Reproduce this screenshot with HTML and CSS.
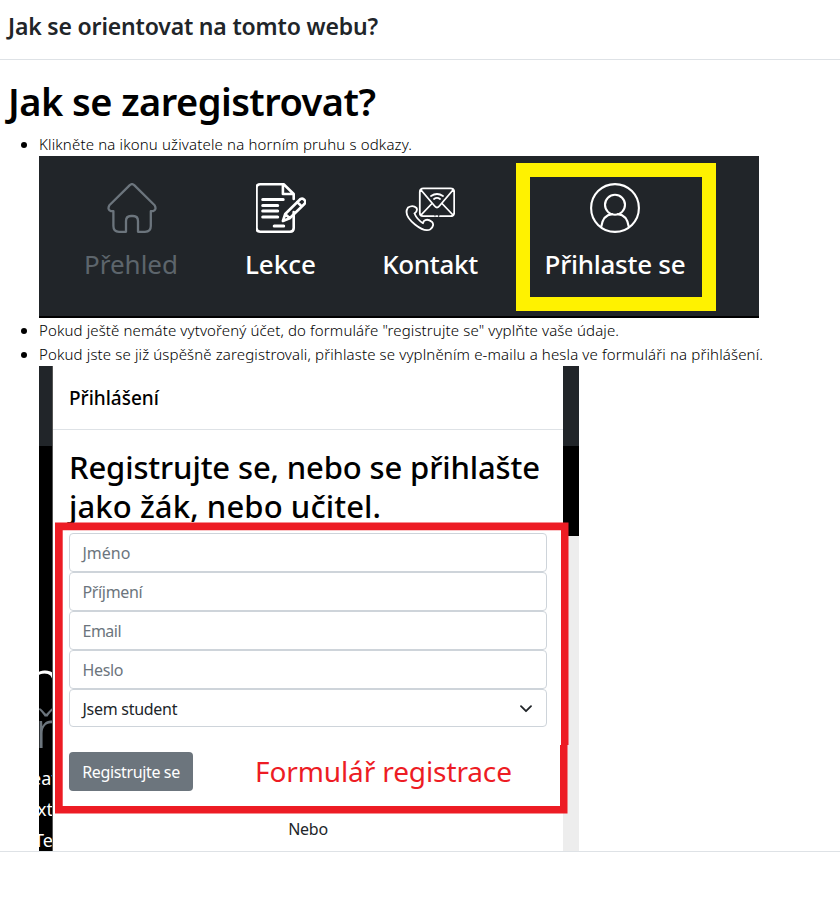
FILE: index.html
```html
<!DOCTYPE html>
<html lang="cs">
<head>
<meta charset="utf-8">
<title>Jak se orientovat na tomto webu?</title>
<link rel="stylesheet" href="styles.css">
</head>
<body>
<header class="modal-header"><h5 class="modal-title">Jak se orientovat na tomto webu?</h5></header>
<main class="modal-body">
  <h1 class="heading">Jak se zaregistrovat?</h1>
  <ul class="steps">
    <li><span class="step s1">Klikněte na ikonu uživatele na horním pruhu s odkazy.</span>
      <div class="nav-shot">
        <div class="nav-item muted">
          <svg viewBox="0 0 50 50"><path d="M22.8 2.1Q25 .2 27.2 2.1L47.6 22.3Q50 26.8 46 28.2H43.8V43Q43.8 48.8 38 48.8H31V38Q31 33 26 33H24Q19 33 19 38V48.8H12Q6.4 48.8 6.4 43V28.2H4Q0 26.8 2.4 22.3Z" stroke-width="2.3"/></svg>
          <span>Přehled</span>
        </div>
        <div class="nav-item lekce">
          <svg viewBox="0 0 50 50"><g stroke-width="2.6" transform="translate(-.8 0)"><path d="M38.5 16V11L28.5 1.3H5Q1.3 1.3 1.3 5V45Q1.3 48.7 5 48.7H34.8Q38.5 48.7 38.5 45V29M27.7 2V11H38"/><path d="M7.5 16.5H28M7.5 22.5H22.5M7.5 28H22.5M7.5 34H22.5M19 43H28.5" stroke-width="3"/><path d="M27.7 38L30 31 45 16.2Q47.5 14.8 49.2 16.8 51 18.8 49.2 21L34.5 35.2ZM30.2 31.2L34.3 35M42 19L46.5 23.4"/></g></svg>
          <span>Lekce</span>
        </div>
        <div class="nav-item kontakt">
          <svg viewBox="0 0 50 50"><g stroke-width="1.8"><path d="M29 33.2H18Q14.8 33.2 14.8 30V9Q14.8 5.3 18.5 5.3H45.5Q49.2 5.3 49.2 9V29.5Q49.2 33.2 45.5 33.2H35M31 33.2H32.5M16 7L29.2 22.5Q32 26.5 34.8 22.5L48 7M16 32L26.5 21M48 32L37.5 21"/><path d="M26 13Q32 9 38 13M29 16Q32 13.8 35 16"/><path d="M9.5 30.5Q13 28 11.5 25 8 21.5 3 24.5-2 32 10 41.5 20 49.5 25.5 46.2 30 42 26.8 38.7 22 35 18.8 38.2L18 40.2Q12 36.5 9.5 30.5"/></g></svg>
          <span>Kontakt</span>
        </div>
        <div class="nav-item login">
          <svg viewBox="0 0 50 50"><g stroke-width="2.1"><circle cx="25" cy="25" r="23.9"/><circle cx="25" cy="21.8" r="10"/><path d="M11.3 43.5Q13 32 22 31.1M38.7 43.5Q37 32 28 31.1"/></g></svg>
          <span>Přihlaste se</span>
        </div>
      </div>
    </li>
    <li><span class="step s2">Pokud ještě nemáte vytvořený účet, do formuláře "registrujte se" vyplňte vaše údaje.</span></li>
    <li><span class="step s3">Pokud jste se již úspěšně zaregistrovali, přihlaste se vyplněním e-mailu a hesla ve formuláři na přihlášení.</span>
      <div class="form-shot">
        <div class="strip left">
          <span class="big">n</span><span class="big grey">ř</span>
          <span class="bit b1">eat</span><span class="bit b2">xt</span><span class="bit b3">Te</span>
        </div>
        <div class="panel">
          <div class="panel-head">Přihlášení</div>
          <h2 class="panel-title"><span class="t1">Registrujte se, nebo se přihlašte</span><br><span class="t2">jako žák, nebo učitel.</span></h2>
          <div class="fields">
            <div class="field"><span class="f1">Jméno</span></div>
            <div class="field"><span class="f2">Příjmení</span></div>
            <div class="field"><span class="f3">Email</span></div>
            <div class="field"><span class="f2">Heslo</span></div>
            <div class="field select"><span>Jsem student</span><svg viewBox="0 0 12 8"><path d="M1 1.2L6 6.2L11 1.2" stroke-width="1.8"/></svg></div>
          </div>
          <div class="actions"><div class="button"><span>Registrujte se</span></div><div class="note">Formulář registrace</div></div>
          <div class="or">Nebo</div>
        </div>
        <div class="strip right"></div>
        <svg class="frame" viewBox="0 0 514 293"><path d="M0 .5H513.5V223H512.5V291.5H0ZM7.7 8.2V284H505V223H506V8.2Z"/></svg>
      </div>
    </li>
  </ul>
</main>
<footer class="modal-footer"></footer>
</body>
</html>
```
FILE: styles.css
```css
* { box-sizing: border-box; }
body { margin: 0; background: #fff; color: #212529; font-family: "Noto Sans", "Open Sans", sans-serif; overflow: hidden; }
svg { fill: none; stroke: currentColor; stroke-linecap: round; stroke-linejoin: round; display: block; }

.modal-header { height: 60px; padding: 8px 8px 0; border-bottom: 1px solid #dee2e6; }
.modal-title { margin: 0; font-size: 23px; line-height: 36px; font-weight: 600; letter-spacing: -.178px; white-space: nowrap; }
.modal-body { height: 791px; overflow: hidden; padding: 17px 8px 0; color: #000; }
.heading { margin: 0 0 7px; font-size: 38px; line-height: 48px; font-weight: 600; letter-spacing: -.54px; white-space: nowrap; }
.modal-footer { height: 51px; border-top: 1px solid #dee2e6; }

.steps { margin: 0; padding: 0 0 0 31px; font-size: 15px; line-height: 24px; list-style: none; }
.steps li { position: relative; }
.steps li::before { content: ""; position: absolute; left: -18px; top: 10px; width: 6px; height: 6px; border-radius: 50%; background: #000; }
.step { font-weight: 300; display: block; height: 24px; white-space: nowrap; }
.s1 { letter-spacing: .156px; }
.s2 { letter-spacing: .127px; }
.s3 { letter-spacing: .139px; }

.nav-shot { display: flex; width: 720px; height: 162px; padding: 7px 0 0 17px; background: #212529; border-bottom: 2px solid #000; color: #fff; }
.nav-item { width: 150px; height: 148px; padding-top: 20px; display: flex; flex-direction: column; align-items: center; font-size: 26px; line-height: 36px; }
.nav-item svg { width: 50px; height: 50px; margin-bottom: 13px; }
.nav-item span { white-space: nowrap; }
.muted { color: #6c757d; }
.muted svg { margin-left: 2px; }
.muted span { color: #5d656c; }
.lekce { font-weight: 500; padding-right: 1px; }
.kontakt { font-weight: 500; letter-spacing: -.32px; padding-right: 2px; }
.login { width: 200px; margin-left: 10px; padding: 6px 2px 0 0; border: 14px solid #fff200; font-weight: 500; letter-spacing: -.26px; }

.form-shot { position: relative; display: flex; width: 540px; height: 486px; overflow: hidden; }
.strip { flex: none; overflow: hidden; }
.left { width: 14px; padding-top: 300px; background: linear-gradient(#212529 80px, #000 80px); color: #fff; border-right: 1px solid #555; }
.left span { display: block; white-space: nowrap; }
.big { width: 40px; height: 17px; font-size: 58px; line-height: 28px; font-weight: 300; text-indent: -13px; overflow: hidden; }
.left .grey { height: 76px; line-height: 90px; color: #6c757d; font-size: 52px; text-indent: -4px; }
.bit { height: 31px; width: 40px; font-size: 18px; line-height: 38px; }
.b1 { text-indent: -8px; }
.b2 { text-indent: -2px; }
.b3 { text-indent: -5px; }
.right { width: 16px; background: linear-gradient(#212529 80px, #000 80px, #000 170px, #ededed 170px); }
.panel { width: 510px; flex: none; background: #fff; border-radius: 4px 4px 0 0; }
.panel-head { height: 64px; padding: 16px 16px 0; border-bottom: 1px solid #dee2e6; font-size: 19px; line-height: 32px; font-weight: 500; }
.panel-title { margin: 0; padding: 18px 16px 0; height: 103px; font-size: 31px; line-height: 39px; font-weight: 500; white-space: nowrap; }
.t1 { letter-spacing: -.134px; }
.t2 { letter-spacing: .106px; }
.fields { padding: 0 16px; }
.field { height: 38.9px; padding: 0 12.5px; border: 1px solid #ced4da; border-radius: 4px; color: #6c757d; font-size: 16px; line-height: 39px; }
.f1 { letter-spacing: 0; }
.f2 { letter-spacing: -.35px; }
.f3 { letter-spacing: -.5px; }
.select { display: flex; justify-content: space-between; align-items: center; color: #212529; letter-spacing: -.277px; padding-top: 2px; }
.select svg { width: 12px; height: 8px; margin-right: 2px; }
.actions { display: flex; padding: 25px 16px 0; height: 87px; }
.button { width: 124px; height: 39px; border-radius: 4px; background: #6c757d; color: #fff; text-align: center; font-size: 16px; line-height: 40px; letter-spacing: -.358px; white-space: nowrap; }
.note { margin-left: 62px; color: #ed1c24; font-size: 28px; line-height: 39px; letter-spacing: -.112px; white-space: nowrap; }
.or { text-align: center; color: #212529; font-size: 16px; line-height: 30px; letter-spacing: -.24px; }
.frame { position: absolute; left: 16px; top: 156px; width: 514px; height: 293px; fill: #ed1c24; fill-rule: evenodd; stroke: none; }
```
